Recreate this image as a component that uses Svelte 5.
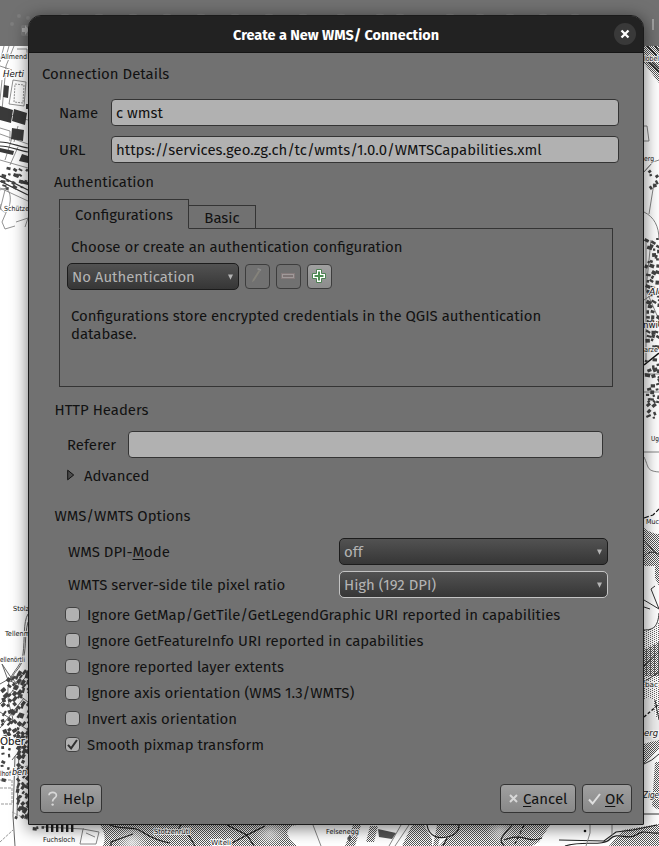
<script>
  const options = [
    { label: 'Ignore GetMap/GetTile/GetLegendGraphic URI reported in capabilities', on: false },
    { label: 'Ignore GetFeatureInfo URI reported in capabilities', on: false },
    { label: 'Ignore reported layer extents', on: false },
    { label: 'Ignore axis orientation (WMS 1.3/WMTS)', on: false },
    { label: 'Invert axis orientation', on: false },
    { label: 'Smooth pixmap transform', on: true }
  ];

  let seed = 7;
  function rnd() {
    seed = (seed * 16807) % 2147483647;
    return seed / 2147483647;
  }
  function village(x, y, w, h, step, angle, size) {
    const list = [];
    for (let j = y; j < y + h; j += step) {
      for (let i = x; i < x + w; i += step) {
        if (rnd() < 0.1) continue;
        list.push({
          x: i + rnd() * 3,
          y: j + rnd() * 3,
          w: size * (0.5 + rnd() * 0.7),
          h: size * (0.4 + rnd() * 0.5),
          a: angle + (rnd() - 0.5) * 40
        });
      }
    }
    return list;
  }
  const houses = [
    ...village(0, 166, 28, 22, 6, 20, 4),
    ...village(0, 678, 14, 58, 5, -40, 5),
    ...village(14, 672, 15, 148, 5, -60, 5),
    ...village(0, 746, 12, 36, 6, 10, 4),
    ...village(30, 825, 14, 5, 5, 10, 4),
    ...village(645, 238, 17, 108, 5, 15, 4.4),
    ...village(645, 358, 17, 42, 5, -5, 4.4),
    ...village(645, 400, 9, 18, 5, -30, 4),
    ...village(650, 168, 10, 16, 5, 60, 4)
  ];
  const labels = [
    { t: 'Allmend', x: 1, y: 59, s: 7, w: 26 },
    { t: 'Herti', x: 3, y: 77, s: 9, w: 21, i: true },
    { t: 'Schütze', x: 4, y: 211, s: 7, w: 25 },
    { t: 'Stolz', x: 13, y: 611, s: 7, w: 16 },
    { t: 'Tellenm', x: 5, y: 636, s: 7, w: 25 },
    { t: 'ellenörtli', x: 0, y: 662, s: 7, w: 25 },
    { t: 'Ober', x: 0, y: 745, s: 10.5, w: 25 },
    { t: 'lhof', x: 0, y: 776, s: 7, w: 11 },
    { t: 'ben', x: 12, y: 775, s: 8, w: 15, i: true },
    { t: 'Fuchsloch', x: 43, y: 842, s: 7, w: 32 },
    { t: 'Stotzenrüti', x: 154, y: 834, s: 7, w: 36 },
    { t: 'Witeli', x: 211, y: 845, s: 7, w: 20 },
    { t: 'Felsenegg', x: 326, y: 834, s: 7, w: 33 },
    { t: 'lobel', x: 644, y: 61, s: 7, w: 15 },
    { t: 'erg', x: 644, y: 161, s: 7, w: 10 },
    { t: 'Al', x: 649, y: 295, s: 9, w: 9, i: true },
    { t: 'nwi', x: 643, y: 328, s: 9.5, w: 15 },
    { t: 'arze', x: 644, y: 352, s: 7, w: 14 },
    { t: 'Ug', x: 651, y: 441, s: 7, w: 8 },
    { t: 'Muc', x: 646, y: 524, s: 7, w: 13 },
    { t: 'bac', x: 645, y: 687, s: 7, w: 13 },
    { t: 'erg', x: 644, y: 736, s: 9, w: 14, i: true },
    { t: 'Zige', x: 643, y: 798, s: 9, w: 16, i: true }
  ];
</script>

{#snippet caret()}
  <svg class="caret" width="5" height="6" viewBox="0 0 5 6"><path d="M0 .5h5L2.5 5.8z" fill="#b4b4b4" /></svg>
{/snippet}

<div class="screen">
  <svg class="map" width="659" height="846" viewBox="0 0 659 846">
    <defs>
      <pattern id="dots" width="2" height="2" patternUnits="userSpaceOnUse">
        <rect width="1" height="1" fill="#555" /><rect x="1" y="1" width="1" height="1" fill="#555" />
      </pattern>
      <pattern id="light" width="4" height="2" patternUnits="userSpaceOnUse">
        <rect width="1" height="1" fill="#666" /><rect x="2" y="1" width="1" height="1" fill="#666" />
      </pattern>
      <radialGradient id="glow"><stop offset="0" stop-color="#eee" stop-opacity=".85" /><stop offset="1" stop-color="#eee" stop-opacity="0" /></radialGradient>
    </defs>
    <rect width="659" height="846" fill="#fff" />

    <g fill="none" stroke="#777" stroke-width=".8">
      <path d="M4 46L0 62M14 46L6 66L2 110M9 46l-4 14M17 49h10v10M13 80l13 2l-2 24l-15-2z" />
      <path d="M15 84l9 1l-1 18l-9-1z" stroke-dasharray="2 1" />
      <path d="M0 112l28 8M0 134l28 10M0 160l28 8M0 188l28 13M6 186l-6 24M8 208l-6 14l3 7l10-3M16 222l12-4l-3 9M5 160l7-22M10 165l8-18M0 66l12 4M2 80l-2 20M0 128l10 3v10M18 126l-4 16" />
      <path d="M0 190c10-6 12 8 9 17s-9 4-9-3" />
    </g>
    <g fill="none" stroke="#333" stroke-width="1.2">
      <path d="M0 142c10 0 20 5 28 6M0 146c10 0 20 5 28 6M0 176l28 14M0 181l28 14" />
    </g>
    <g fill="#3a3a3a">
      <path d="M4 85l5 1l-1 12l-5-1zM0 106l13 4l-2 13l-11-3zM14 109l13 4l-2 12l-13-4zM12 128l12 2l-1 11l-12-2zM26 104h2v5h-2zM22 154l6 2v7l-9-2zM0 148l14 3l-1 4l-13-3zM14 173l5 2l-1 3l-5-2zM21 180l7 2v3l-8-2z" />
    </g>

    <g fill="none" stroke="#666" stroke-width="1">
      <path d="M28 614c-5 8-3 25-5 40s-14 18-15 34s3 20 5 32M28 622c-4 14-1 29-6 40s-8 8-11 20M2 664l8 12l7 8l-9-4zM0 704l28-29M12 690l16 12M0 684l14-8M15 756l-2 60l2 30M19 750l-2 66M0 712l28 18M0 728l24-30M28 740l-16 20" />
      <path d="M0 788h12v16H0M28 766l-10 2M0 780h12v6M12 812l16 8M0 842l13-12" stroke="#999" stroke-dasharray="3 1" />
    </g>

    <path d="M100 825h230v21H103c4-10 0-16-3-21z" fill="url(#dots)" />
    <path d="M402 846l10-21h12l8 14v7zM437 825h22l-7 12h-12l-2 9h-5zM504 825h46l-11 17l-7 4h-31zM459 825h52l-10 21h-62zM623 830l36-6v22h-50z" fill="url(#dots)" />
    <ellipse cx="132" cy="842" rx="16" ry="16" fill="url(#glow)" />
    <ellipse cx="270" cy="832" rx="16" ry="14" fill="url(#glow)" />
    <ellipse cx="500" cy="830" rx="14" ry="14" fill="url(#glow)" />
    <path d="M287 833q2-8 10-8h36v21h-36q-8-6-10-13z" fill="#fff" />
    <g fill="none" stroke="#222" stroke-width="1.2">
      <path d="M110 825c8 4 18 2 26 4s12 10 34 14M111 846v-4l22-8M181 825l-5 8M188 834l7 12M227 825l20 10l18-9M232 843l15-8l7 11M427 825c2 12 12 14 20 12s12-5 12-12M447 838l-4 8M512 825c-8 10-15 14-8 21M504 840c20-8 24 4 38-2M559 840l45 1l12-9l17-2l24-5M565 846c18-6 38 1 45-7s18 2 26-4s12-1 23-2" />
      <path d="M524 825l-9 19" stroke-dasharray="4 2" />
    </g>
    <g fill="none" stroke="#888" stroke-width="1">
      <path d="M313 825l8 21M409 825l-14 21M401 825l-12 21M590 825v8l-4 13M612 825v10M44 827l40 2M83 829l-3 15h16l3-12zM86 833l9 4" />
    </g>
    <path d="M353 825h8l-6 21h-10zM370 826h8l-4 16h-8z" fill="url(#dots)" />
    <g fill="#555">
      <path d="M378 829l18 4l-4 6l-13-2zM347 838l5-4l-2 8z" />
      {#each [46, 51, 56, 61, 66, 71] as x}<rect {x} y="825" width="2.4" height="7" fill="#222" />{/each}
      <circle cx="585" cy="831" r="1.3" fill="#111" />
    </g>

    <path d="M644 46h15v37l-15-20z" fill="url(#dots)" />
    <g fill="none" stroke="#222" stroke-width="1.3"><path d="M647 46l12 12M644 58l15 14M652 62l7 7M655 46l4 5" /></g>
    <g fill="none" stroke="#777" stroke-width=".9">
      <path d="M644 126h3l2 15h-5M644 172l9-10l6-2M644 172l7-8M654 183l-5 31M644 212c10 5 15 14 15 28M644 452h15M644 457c5 10 2 14 15 15M646 240v120M651 240l-5 50l13 30M644 300l15-10M644 374h15M644 392h15" />
    </g>
    <path d="M644 365l15-12" stroke="#111" stroke-width="1.6" />
    <path d="M644 518l9-3l6-6" stroke="#111" stroke-width="1.2" fill="none" stroke-dasharray="5 2" />
    <path d="M644 528q8 6 15 6v52l-4-8v-12h-11z" fill="url(#dots)" />
    <path d="M644 630q12 0 15-8v95l-15 8z" fill="url(#light)" />
    <path d="M644 650l15-8v34h-15zM644 744l15-5v10l-15 15z" fill="url(#dots)" />
    <path d="M655 762h4v48l-7-4z" fill="url(#dots)" />
    <path d="M644 700q10-6 10 6t5 14v20q-8 4-15-3z" fill="#eee" />
    <g fill="none" stroke="#333" stroke-width="1"><path d="M644 540l15 17M644 557q5-8 15-3M655 586l-4 3l8 20M644 600l15 9M644 607l6 2M644 630c9 0 14-3 15-17M644 666l15-14M644 682l15-10M655 700l4 20M644 764q8-3 15-10M644 814h15" /></g>
    <path d="M644 717l15-13" stroke="#111" stroke-width="1.4" stroke-dasharray="3 2" />

    <g fill="#444">
      {#each houses as b}
        <rect x={b.x} y={b.y} width={b.w} height={b.h} transform="rotate({b.a} {b.x} {b.y})" />
      {/each}
    </g>
    {#each labels as l}
      <text x={l.x} y={l.y} font-size={l.s} textLength={l.w} lengthAdjust="spacingAndGlyphs" font-style={l.i ? 'italic' : 'normal'}>{l.t}</text>
    {/each}

    <rect width="659" height="46" fill="#717171" />
    <g fill="#7e7e7e">
      <circle cx="19" cy="16" r="2" /><circle cx="12" cy="24" r="2" /><circle cx="28" cy="18" r="2" />
      <rect x="21" y="25" width="9" height="11" rx="2" />
      <path d="M22 28h3v-3l4 5l-4 5v-3h-3z" fill="#aaa" />
      {#each [65, 99, 133, 167, 201, 235, 269, 303, 341, 380, 400, 450, 480, 510, 543, 575] as cx}<ellipse {cx} cy="15" rx="4" ry="1.2" />{/each}
    </g>
    <rect x="652" y="19" width="2" height="11" fill="#a0a0a0" />
  </svg>

  <div class="dialog">
    <header>
      <span class="title">Create a New WMS/ Connection</span>
      <button class="close" aria-label="Close">
        <svg width="10" height="10" viewBox="0 0 10 10"><path d="M1.5 1.5l7 7M8.5 1.5l-7 7" stroke="#fff" stroke-width="2.3" /></svg>
      </button>
    </header>

    <main>
      <div class="heading details">Connection Details</div>
      <div class="field"><span class="name">Name</span><div class="input">c wmst</div></div>
      <div class="field"><span class="name">URL</span><div class="input">https://services.geo.zg.ch/tc/wmts/1.0.0/WMTSCapabilities.xml</div></div>
      <div class="heading auth">Authentication</div>

      <div class="tabs">
        <div class="tab active">Configurations</div>
        <div class="tab">Basic</div>
      </div>
      <section class="panel">
        <div class="line">Choose or create an authentication configuration</div>
        <div class="picker">
          <div class="select"><span>No Authentication</span>{@render caret()}</div>
          <button class="tool" aria-label="Edit">
            <svg width="25" height="25" viewBox="0 0 25 25"><path d="M7 18.5l.8-3l6-9.5l1.6 1l-6 9.5z" fill="#85837b" /><path d="M12.5 4.8l3.6 1.4" fill="none" stroke="#8b8b8b" stroke-width="1.6" /></svg>
          </button>
          <button class="tool" aria-label="Remove">
            <svg width="25" height="25" viewBox="0 0 25 25"><rect x="5.5" y="9.5" width="13" height="5" fill="none" stroke="#857b7b" /><rect x="6.5" y="10.5" width="11" height="3" fill="#7c7474" stroke="#a09a9a" /></svg>
          </button>
          <button class="tool lit" aria-label="Add">
            <svg width="25" height="25" viewBox="0 0 25 25"><path d="M9.5 5.5h5v4h4v5h-4v4h-5v-4h-4v-5h4z" fill="#fff" stroke="#4d8152" /><path d="M12 7.5v9M7.5 12h9" stroke="#4d8f52" stroke-width="2" /></svg>
          </button>
        </div>
        <p>Configurations store encrypted credentials in the QGIS authentication<br />database.</p>
      </section>

      <div class="heading http">HTTP Headers</div>
      <div class="referer"><span>Referer</span><div class="input"></div></div>
      <div class="advanced">
        <svg width="8" height="12" viewBox="0 0 8 12"><path d="M.7 1.2v9.6l6-4.8z" fill="#4b4b4b" stroke="#111" /></svg>
        <span>Advanced</span>
      </div>

      <div class="heading wms">WMS/WMTS Options</div>
      <div class="combo"><span>WMS DPI-<u>M</u>ode</span><div class="select"><span>off</span>{@render caret()}</div></div>
      <div class="combo"><span>WMTS server-side tile pixel ratio</span><div class="select focus"><span>High (192 DPI)</span>{@render caret()}</div></div>

      <div class="checks">
        {#each options as o}
          <div class="check">
            <span class="box">
              {#if o.on}<svg width="13" height="13" viewBox="0 0 13 13"><path d="M2 6.8l3.1 3.6L11 2" fill="none" stroke="#303030" stroke-width="2" /></svg>{/if}
            </span>
            <span>{o.label}</span>
          </div>
        {/each}
      </div>

      <footer>
        <button class="btn help"><svg width="10" height="16" viewBox="0 0 10 16"><path d="M1 4.2C1 .3 8.6.4 8.4 4.5C8.3 7.2 4.6 7 4.6 10.5" fill="none" stroke="#d8d8d8" stroke-width="1.7" /><circle cx="4.6" cy="13.6" r="1.2" fill="#d8d8d8" /></svg><span>Help</span></button>
        <button class="btn cancel"><svg width="9" height="9" viewBox="0 0 9 9"><path d="M1 1l7 7M8 1l-7 7" stroke="#d8d8d8" stroke-width="2" /></svg><span><u>C</u>ancel</span></button>
        <button class="btn ok"><svg width="13" height="12" viewBox="0 0 13 12"><path d="M1 6.5l3.6 4L12 1" fill="none" stroke="#e0e0e0" stroke-width="2" /></svg><span><u>O</u>K</span></button>
      </footer>
    </main>
  </div>
</div>

<style>
  .screen { position: relative; width: 659px; height: 846px; overflow: hidden; font: 14.93px/20px "Fira Sans", "Noto Sans", sans-serif; color: #121212; }
  .screen * { box-sizing: border-box; }
  .map { display: block; }
  .map text { font-family: "DejaVu Sans", sans-serif; fill: #111; stroke: #fff; stroke-width: 2px; paint-order: stroke; }
  .dialog { position: absolute; left: 28px; top: 15px; width: 616px; height: 810px; border: 1px solid #1b1b1b; border-radius: 13px 13px 1px 1px; background: #717171; display: flex; flex-direction: column; overflow: hidden; white-space: nowrap; box-shadow: 0 3px 16px 1px rgba(0, 0, 0, .5); }
  header { flex: none; height: 37px; background: #222; border-bottom: 1px solid #151515; display: flex; align-items: center; justify-content: flex-end; padding-right: 7px; }
  .title { flex: 1; text-align: center; padding-left: 29px; padding-top: 1px; color: #fff; font-weight: 700; font-size: 14.45px; }
  button { font: inherit; color: inherit; padding: 0; }
  .close { width: 22px; height: 22px; border: 0; border-radius: 50%; background: #393939; display: flex; align-items: center; justify-content: center; }
  main { flex: 1; display: flex; flex-direction: column; padding: 11px 11px 0; }
  .heading { height: 20px; flex: none; }
  .details { padding-left: 2px; margin-bottom: 15px; }
  .field { display: flex; align-items: center; padding: 0 13px 0 19px; margin-bottom: 10px; height: 27px; }
  .name { width: 52px; }
  .input { flex: 1; height: 27px; border: 1px solid #343434; border-radius: 4px; background: #b1b1b1; padding-left: 4px; display: flex; align-items: center; }
  .auth { padding-left: 14px; margin: -1px 0 7px; }
  .tabs { display: flex; align-items: flex-end; padding-left: 19px; height: 30px; position: relative; }
  .tab { height: 24px; width: 67px; border: 1px solid #343434; border-left: 0; display: flex; align-items: center; justify-content: center; padding-top: 2px; }
  .tab.active { height: 30px; width: 130px; border-left: 1px solid #343434; border-bottom-color: #717171; }
  .panel { margin: -1px 0 0 19px; width: 554px; height: 159px; border: 1px solid #343434; padding: 8px 0 0 7px; }
  .line { padding-left: 4px; height: 20px; }
  .picker { display: flex; align-items: center; gap: 6px; margin-top: 6px; height: 27px; }
  .select { width: 172px; height: 27px; border: 1px solid #1c1c1c; border-radius: 5px; background: linear-gradient(#525252, #363636); color: #b4b4b4; display: flex; align-items: center; justify-content: space-between; padding: 0 5px 0 4px; }
  .select.focus { border-color: #c4c4c4; }
  .tool { width: 25px; height: 25px; border: 1px solid #3d3d3d; border-radius: 4px; background: none; display: flex; align-items: center; justify-content: center; }
  .tool svg { flex: none; }
  .lit { background: linear-gradient(#a0a0a0, #8c8c8c); }
  p { margin: 17px 0 0 4px; line-height: 18px; }
  .http { padding-left: 14.5px; margin-top: 13px; }
  .referer { display: flex; align-items: center; padding: 0 29px 0 27px; margin-top: 11px; height: 27px; }
  .referer span { width: 61px; }
  .advanced { display: flex; align-items: center; gap: 9px; padding-left: 27px; height: 20px; margin-top: 8px; }
  .advanced svg { margin-top: -2px; }
  .wms { padding-left: 14.5px; margin-top: 20px; margin-bottom: 12px; }
  .combo { display: flex; align-items: center; justify-content: space-between; padding: 0 24px 0 28px; height: 27px; margin-bottom: 6px; }
  .combo .select { width: 269px; }
  .checks { margin-top: -2px; padding-left: 25px; }
  .check { display: flex; align-items: center; gap: 7px; height: 26px; }
  .box { width: 15px; height: 15px; margin-bottom: 1px; border: 1px solid #424242; border-radius: 4px; background: #b1b1b1; display: flex; }
  .box svg { display: block; }
  footer { display: flex; margin-top: 26px; }
  .btn { height: 29px; border: 1px solid #343434; border-radius: 4px; background: linear-gradient(#a0a0a0, #888); display: flex; align-items: center; }
  .help { width: 62px; padding-left: 7px; gap: 5px; }
  .cancel { width: 76px; padding-left: 8px; gap: 5px; margin-left: auto; }
  .ok { width: 50px; padding-left: 5px; gap: 4px; margin-left: 6px; }
  u { text-decoration: underline; text-decoration-thickness: 1px; text-underline-offset: 2px; text-decoration-skip-ink: none; }
</style>
